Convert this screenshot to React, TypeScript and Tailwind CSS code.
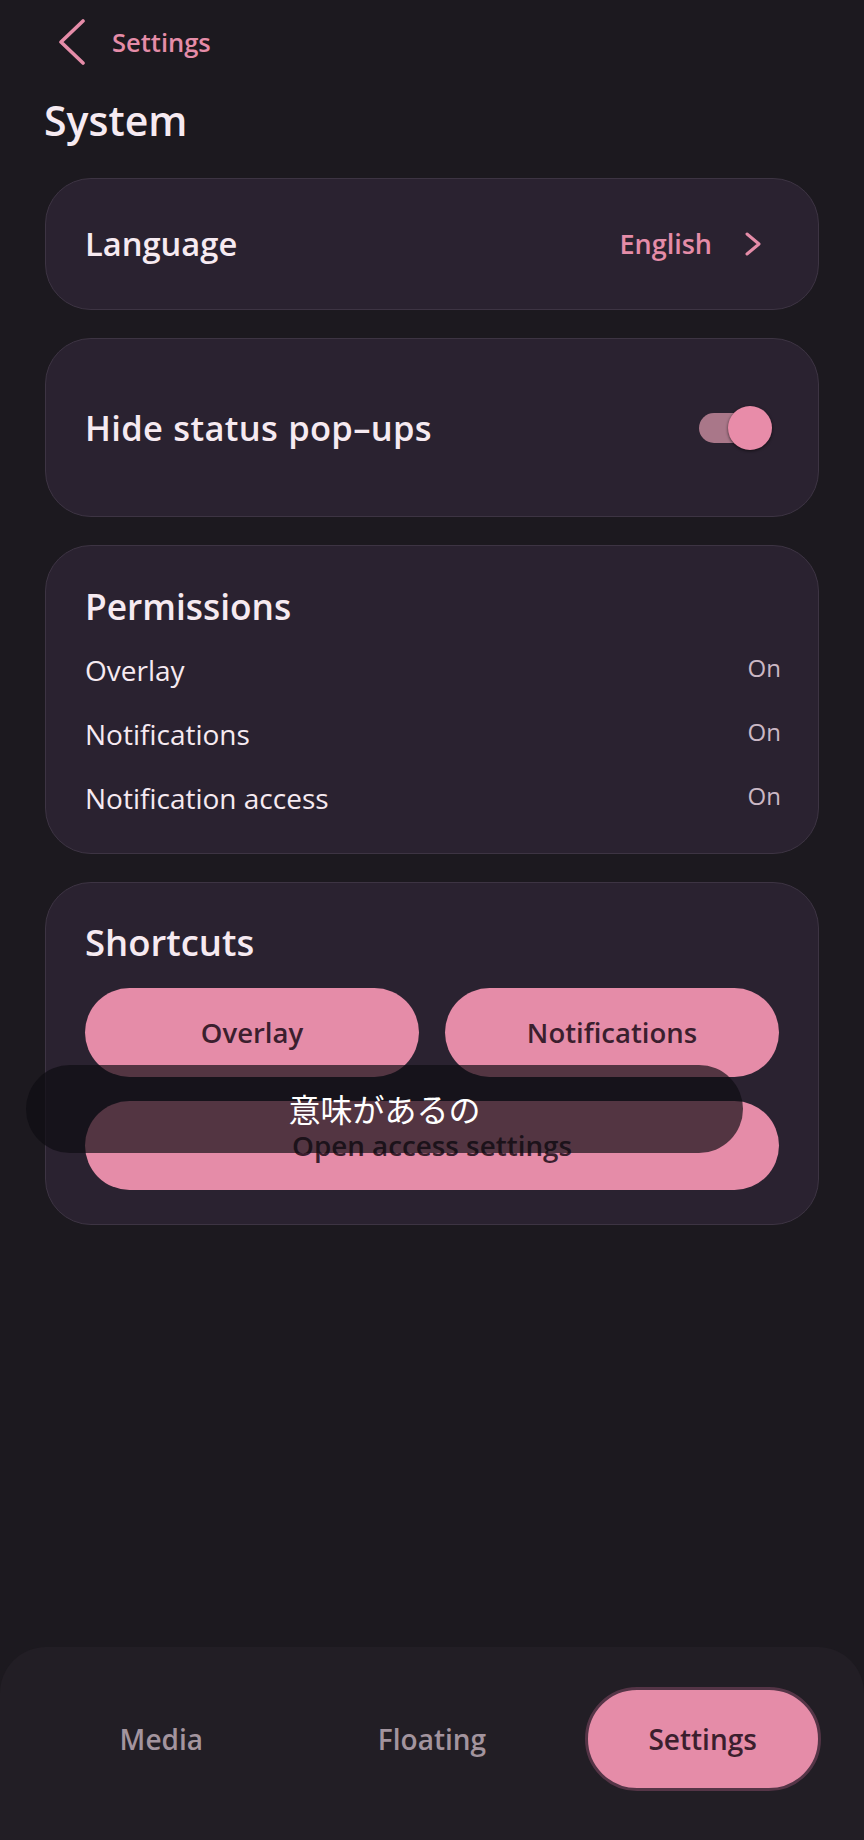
import React from 'react';

const permissions = ['Overlay', 'Notifications', 'Notification access'];

const tabs = [
  { label: 'Media', active: false },
  { label: 'Floating', active: false },
  { label: 'Settings', active: true },
];

const Toggle = () => (
  <div className="relative w-[73px] h-[44px] flex items-center">
    <div className="w-[56px] h-[30px] rounded-full bg-[#a97789]" />
    <div className="absolute left-[29px] top-0 w-[44px] h-[44px] rounded-full bg-[#e88ca9] shadow-[0_1px_3px_rgba(10,5,8,0.7)]" />
  </div>
);

export default function App() {
  return (
    <div className="relative w-[864px] h-[1840px] bg-[#1c191f] flex flex-col font-['Open_Sans',sans-serif] text-[#f6eaf1] overflow-hidden">
      {/* header */}
      <div className="flex items-center h-[84px] pl-[58px] gap-[26px]">
        <svg width="28" height="46" viewBox="0 0 28 46" fill="none">
          <path d="M25 2 L3 23 L25 44" stroke="#e58ca8" strokeWidth="3.6" strokeLinecap="round" strokeLinejoin="round" />
        </svg>
        <span className="text-[25.5px] font-semibold text-[#e58ca8]">Settings</span>
      </div>
      <h1 className="mt-[12px] pl-[44px] text-[41px] leading-[48px] font-semibold">System</h1>

      <div className="mt-[34px] px-[45px] flex flex-col gap-[28px]">
        {/* language */}
        <div className="h-[132px] rounded-[46px] bg-[#2a2230] border border-[#3d3443] flex items-center justify-between pl-[39px] pr-[56px]">
          <span className="text-[32.7px] font-semibold">Language</span>
          <div className="flex items-center gap-[32px]">
            <span className="text-[27px] font-semibold text-[#e58ca8]">English</span>
            <svg width="18" height="24" viewBox="0 0 18 24" fill="none">
              <path d="M3 2 L15 12 L3 22" stroke="#e58ca8" strokeWidth="3" strokeLinecap="round" strokeLinejoin="round" />
            </svg>
          </div>
        </div>

        {/* hide popups */}
        <div className="h-[179px] rounded-[46px] bg-[#2a2230] border border-[#3d3443] flex items-center justify-between pl-[39px] pr-[46px]">
          <span className="text-[34.5px] font-semibold tracking-[0.3px] [word-spacing:1px]">Hide status pop–ups</span>
          <Toggle />
        </div>

        {/* permissions */}
        <div className="rounded-[46px] bg-[#2a2230] border border-[#3d3443] pl-[39px] pr-[37px] pt-[28px] pb-[23px] flex flex-col">
          <div className="h-[64px] flex items-center text-[35.3px] font-semibold">Permissions</div>
          {permissions.map((p) => (
            <div key={p} className="h-[64px] flex items-center justify-between">
              <span className="text-[28px]">{p}</span>
              <span className="text-[24px] text-[#cbb8c4] -mt-[4px]">On</span>
            </div>
          ))}
        </div>

        {/* shortcuts */}
        <div className="rounded-[46px] bg-[#2a2230] border border-[#3d3443] px-[39px] pt-[35px] pb-[34px] flex flex-col">
          <div className="h-[48px] flex items-center text-[36.5px] font-semibold">Shortcuts</div>
          <div className="mt-[22px] grid grid-cols-2 gap-x-[26px] gap-y-[24px]">
            <button className="h-[89px] rounded-full bg-[#e58ca8] text-[#3b1f2e] text-[27.5px] font-semibold">Overlay</button>
            <button className="h-[89px] rounded-full bg-[#e58ca8] text-[#3b1f2e] text-[27.5px] font-semibold">Notifications</button>
            <button className="col-span-2 h-[89px] rounded-full bg-[#e58ca8] text-[#3b1f2e] text-[27.8px] font-semibold">Open access settings</button>
          </div>
        </div>
      </div>

      <div className="flex-1" />

      {/* bottom nav */}
      <nav className="h-[193px] rounded-t-[46px] bg-[#221e25] grid grid-cols-3 px-[26px] pt-[40px] pb-[49px]">
        {tabs.map((t) => (
          <div key={t.label} className="flex items-center justify-center">
            {t.active ? (
              <div className="w-[236px] h-[104px] rounded-full bg-[#e58ca8] border-[3px] border-[#553547] flex items-center justify-center text-[28px] font-semibold text-[#3b1f2e]">
                {t.label}
              </div>
            ) : (
              <span className="text-[28px] font-semibold text-[#a3949e]">{t.label}</span>
            )}
          </div>
        ))}
      </nav>

      {/* toast */}
      <div className="absolute left-[26px] top-[1065px] w-[717px] h-[88px] rounded-full bg-[rgba(14,12,18,0.68)] flex items-center justify-center">
        <span className="text-[32px] text-white font-['Noto_Sans_CJK_JP',sans-serif] -mt-[2px]">意味があるの</span>
      </div>
    </div>
  );
}
